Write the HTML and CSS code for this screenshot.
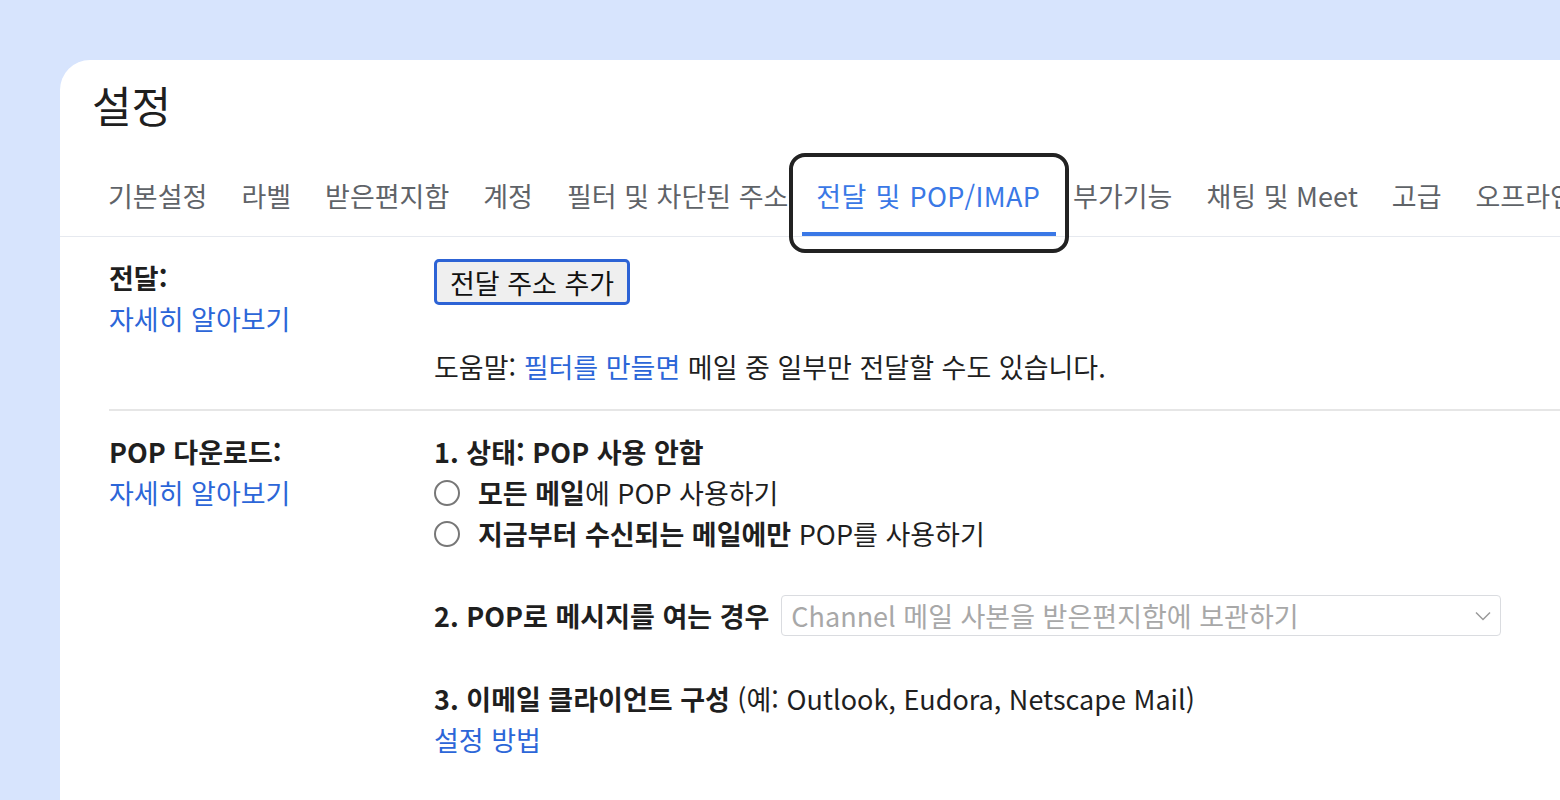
FILE: index.html
```html
<!DOCTYPE html>
<html lang="ko">
<head>
<meta charset="utf-8">
<title>설정</title>
<link rel="stylesheet" href="styles.css">
</head>
<body>
<div class="card">
  <h1 class="title">설정</h1>
  <nav class="tabs">
    <a class="tab">기본설정</a>
    <a class="tab">라벨</a>
    <a class="tab">받은편지함</a>
    <a class="tab">계정</a>
    <a class="tab">필터 및 차단된 주소</a>
    <a class="tab active">전달 및 POP/IMAP</a>
    <a class="tab">부가기능</a>
    <a class="tab">채팅 및 Meet</a>
    <a class="tab">고급</a>
    <a class="tab">오프라인</a>
  </nav>
  <div class="content">
    <section class="row first">
      <div class="label">
        <div class="label-title">전달:</div>
        <a class="link">자세히 알아보기</a>
      </div>
      <div class="body">
        <button class="btn">전달 주소 추가</button>
        <p class="help">도움말: <a class="link">필터를 만들면</a> 메일 중 일부만 전달할 수도 있습니다.</p>
      </div>
    </section>
    <section class="row">
      <div class="label">
        <div class="label-title">POP 다운로드:</div>
        <a class="link">자세히 알아보기</a>
      </div>
      <div class="body">
        <div class="group">
          <div class="strong">1. 상태: POP 사용 안함</div>
          <label class="radio-line"><span class="radio"></span><span><b>모든 메일</b>에 POP 사용하기</span></label>
          <label class="radio-line"><span class="radio"></span><span><b>지금부터 수신되는 메일에만</b> POP를 사용하기</span></label>
        </div>
        <div class="group gap">
          <div class="select-line">
            <span class="strong">2. POP로 메시지를 여는 경우</span>
            <span class="select">
              <span class="select-text">Channel 메일 사본을 받은편지함에 보관하기</span>
              <svg class="chev" width="16" height="10" viewBox="0 0 16 10"><path d="M1 1.5 L8 8.5 L15 1.5" fill="none" stroke="#9a9a9a" stroke-width="1.5"/></svg>
            </span>
          </div>
        </div>
        <div class="group gap2">
          <div><span class="strong">3. 이메일 클라이언트 구성</span> (예: Outlook, Eudora, Netscape Mail)</div>
          <a class="link">설정 방법</a>
        </div>
      </div>
    </section>
  </div>
</div>
</body>
</html>
```

FILE: styles.css
```css
* { box-sizing: border-box; }
html, body {
  margin: 0;
  padding: 0;
  height: 800px;
  overflow: hidden;
}
body {
  background: #d7e4fd;
  font-family: "Noto Sans CJK KR", "Noto Sans", sans-serif;
  color: #1f1f1f;
}
.card {
  margin: 60px 0 0 60px;
  width: 1500px;
  height: 740px;
  background: #ffffff;
  border-top-left-radius: 30px;
  overflow: hidden;
}
.title {
  margin: 19px 0 0 32px;
  font-size: 43px;
  line-height: 50px;
  font-weight: 400;
  color: #1f1f1f;
}
.tabs {
  margin-top: 37px;
  display: flex;
  padding-left: 31px;
  border-bottom: 1px solid #e6e9ef;
  white-space: nowrap;
}
.tab {
  flex: none;
  position: relative;
  padding: 15px 17px 21px;
  font-size: 27px;
  line-height: 30px;
  color: #5f6368;
  border-bottom: 4px solid transparent;
}
.tab:nth-child(5) { padding-right: 14px; }
.tab.active {
  padding: 15px 16px 21px 14px;
  color: #3a78e6;
  border-bottom-color: #3a78e6;
  word-spacing: 1px;
  letter-spacing: 0.3px;
}
.tab.active::after {
  content: "";
  position: absolute;
  left: -13px;
  right: -13px;
  top: -13px;
  bottom: -21px;
  border: 4px solid #222222;
  border-radius: 16px;
}
.content {
  padding-left: 49px;
}
.row {
  display: grid;
  grid-template-columns: 325px 1fr;
  padding-top: 20px;
  font-size: 27px;
  line-height: 41px;
}
.row.first {
  padding-bottom: 22px;
  border-bottom: 2px solid #e6e6e6;
}
.label-title, .strong, b {
  font-weight: 700;
  color: #1f1f1f;
}
.link {
  color: #2c66d8;
  display: inline-block;
}
.label .link { display: block; }
.btn {
  display: block;
  margin-top: 2px;
  height: 46px;
  width: 196px;
  padding: 0;
  font-family: inherit;
  font-size: 27px;
  color: #111;
  background: #efefef;
  border: 3px solid #2d63d5;
  border-radius: 5px;
}
.help {
  margin: 41px 0 0;
}
.radio-line {
  display: flex;
  align-items: center;
}
.radio {
  width: 26px;
  height: 26px;
  border: 2px solid #777;
  border-radius: 50%;
  margin-right: 18px;
  flex: none;
}
.gap { margin-top: 41px; }
.gap2 { margin-top: 42px; }
.select-line {
  display: flex;
  align-items: center;
}
.select {
  margin-left: 12px;
  width: 720px;
  height: 41px;
  border: 1px solid #dadce0;
  border-radius: 4px;
  display: flex;
  align-items: center;
  justify-content: space-between;
  padding: 0 9px 0 9px;
}
.select-text {
  color: #a8a8a8;
  line-height: 39px;
}
.chev { margin-right: 0; }
```
